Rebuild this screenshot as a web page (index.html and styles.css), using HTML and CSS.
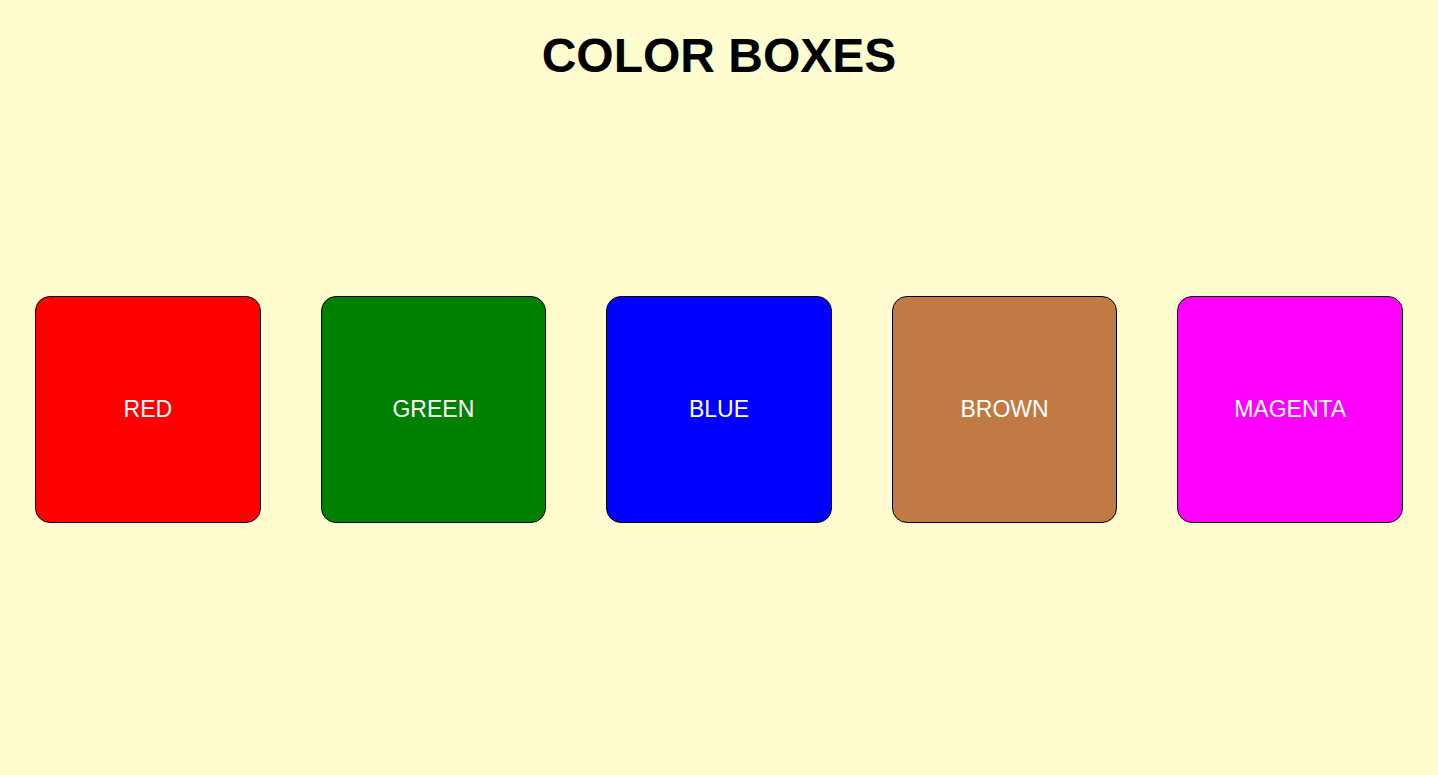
FILE: index.html
```html
<!DOCTYPE html>
<html lang="en">
<head>
<meta charset="utf-8">
<title>Color Boxes</title>
<link rel="stylesheet" href="styles.css">
</head>
<body>
  <h1 class="title">COLOR BOXES</h1>
  <div class="boxes">
    <div class="box red">RED</div>
    <div class="box green">GREEN</div>
    <div class="box blue">BLUE</div>
    <div class="box brown">BROWN</div>
    <div class="box magenta">MAGENTA</div>
  </div>
</body>
</html>
```
FILE: styles.css
```css
html, body {
  margin: 0;
  padding: 0;
}
body {
  background: #fffdd0;
  font-family: "Liberation Sans", Arial, sans-serif;
  height: 775px;
  overflow: hidden;
}
.title {
  margin: 0;
  padding-top: 28px;
  font-size: 48px;
  font-weight: bold;
  line-height: 55px;
  text-align: center;
  color: #000;
}
.boxes {
  display: flex;
  justify-content: space-between;
  padding: 0 35px;
  margin-top: 213px;
}
.box {
  box-sizing: border-box;
  width: 225.6px;
  height: 227px;
  border: 1px solid #000;
  border-radius: 15px;
  display: flex;
  align-items: center;
  justify-content: center;
  color: #fff;
  font-size: 23px;
}
.red { background: #ff0000; }
.green { background: #008000; }
.blue { background: #0000ff; }
.brown { background: #c17a43; }
.magenta { background: #ff00ff; }
```
